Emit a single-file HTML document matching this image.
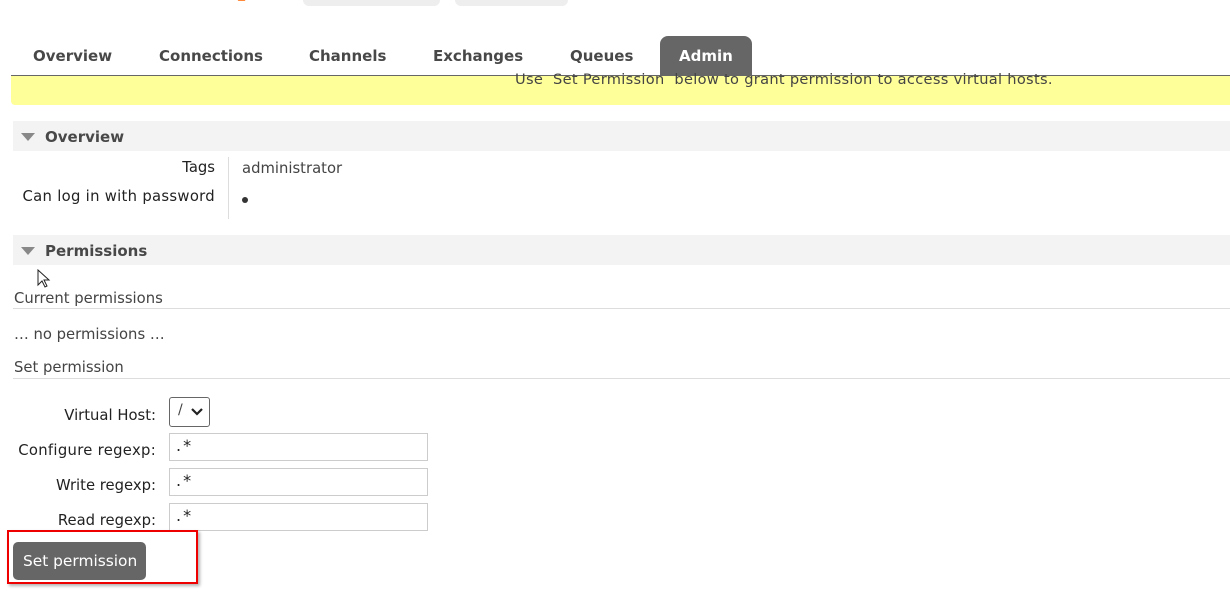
<!DOCTYPE html>
<html><head><style>
body{margin:0;width:1230px;height:597px;overflow:hidden;background:#fff;font-family:"DejaVu Sans","Liberation Sans",sans-serif;color:#444;position:relative}
.a{position:absolute;white-space:nowrap}
.tab{position:absolute;top:46px;font-weight:bold;font-size:15px;color:#484848}
.sec{position:absolute;left:13px;width:1217px;height:30px;background:#f3f3f3}
.sec span{position:absolute;left:32px;top:7px;font-weight:bold;font-size:15px;color:#484848}
.tri{position:absolute;left:8px;top:12px;width:0;height:0;border-left:7px solid transparent;border-right:7px solid transparent;border-top:8px solid #888}
.lbl{font-size:14.8px;color:#222}
.r{text-align:right}
.inp{position:absolute;left:169px;width:257px;height:26px;border:1px solid #ccc;font-size:16px;color:#222}
.inp span{position:absolute;left:6px;top:2px;letter-spacing:2px}
</style></head><body>
<div class="a" style="left:28px;top:-38px;font-size:40px;font-weight:bold;color:#f60;line-height:40px">RabbitMQ</div>
<div class="a" style="left:303px;top:-14px;width:137px;height:20px;background:#eee;border-radius:6px"></div>
<div class="a" style="left:455px;top:-14px;width:113px;height:20px;background:#eee;border-radius:6px"></div>
<div class="tab" style="left:33px;top:47px">Overview</div>
<div class="tab" style="left:159px;top:47px">Connections</div>
<div class="tab" style="left:309px;top:47px">Channels</div>
<div class="tab" style="left:433px;top:47px">Exchanges</div>
<div class="tab" style="left:570px;top:47px">Queues</div>
<div class="a" style="left:660px;top:36px;width:92px;height:39px;background:#666;border-radius:8px 8px 0 0"></div>
<div class="tab" style="left:679px;top:47px;color:#fff">Admin</div>
<div class="a" style="left:11px;top:75px;width:1219px;height:1px;background:#666"></div>
<div class="a" style="left:11px;top:76px;width:1219px;height:29px;background:#ffff99;border-radius:0 0 0 4px"></div>
<div class="a" style="left:515px;top:71px;font-size:14.6px;color:#444;letter-spacing:0.3px">Use &nbsp;Set Permission&nbsp; below to grant permission to access virtual hosts.</div>
<div class="sec" style="top:121px"><div class="tri"></div><span>Overview</span></div>
<div class="a lbl r" style="right:1015px;top:159px">Tags</div>
<div class="a lbl r" style="right:1015px;top:188px;letter-spacing:0.3px">Can log in with password</div>
<div class="a" style="left:228px;top:157px;width:1px;height:62px;background:#ddd"></div>
<div class="a lbl" style="left:242px;top:160px;color:#444">administrator</div>
<div class="a" style="left:242px;top:197px;width:6px;height:6px;border-radius:3px;background:#333"></div>
<div class="sec" style="top:235px"><div class="tri"></div><span>Permissions</span></div>
<div class="a lbl" style="left:14px;top:290px;color:#444">Current permissions</div>
<div class="a" style="left:13px;top:308px;width:1217px;height:1px;background:#ddd"></div>
<div class="a lbl" style="left:14px;top:326px;color:#444">… no permissions …</div>
<div class="a lbl" style="left:14px;top:359px;color:#444">Set permission</div>
<div class="a" style="left:13px;top:378px;width:1217px;height:1px;background:#ddd"></div>
<div class="a lbl r" style="right:1074px;top:407px">Virtual Host:</div>
<div class="a" style="left:169px;top:397px;width:39px;height:28px;border:1px solid #666;border-radius:3px;font-size:14px"><span style="position:absolute;left:8px;top:4px">/</span>
<svg style="position:absolute;left:21px;top:10px" width="12" height="8" viewBox="0 0 12 8"><path d="M1 1l5 5 5-5" stroke="#222" stroke-width="2.2" fill="none"/></svg></div>
<div class="a lbl r" style="right:1074px;top:442px;letter-spacing:0.3px">Configure regexp:</div>
<div class="inp" style="top:433px"><span>.*</span></div>
<div class="a lbl r" style="right:1074px;top:477px">Write regexp:</div>
<div class="inp" style="top:468px"><span>.*</span></div>
<div class="a lbl r" style="right:1074px;top:512px">Read regexp:</div>
<div class="inp" style="top:503px"><span>.*</span></div>
<div class="a" style="left:13px;top:542px;width:133px;height:38px;background:#666;border-radius:5px"></div>
<div class="a" style="left:23px;top:552px;font-size:15.4px;color:#fff">Set permission</div>
<div class="a" style="left:7px;top:530px;width:187px;height:50px;border:2px solid #e00;box-shadow:2px 2px 3px rgba(0,0,0,.3)"></div>
<svg class="a" style="left:37px;top:269px" width="14" height="20" viewBox="0 0 14 20"><path d="M1 1v15l4-4 3 6 2-1-3-6h5z" fill="#fff" stroke="#222" stroke-width="1"/></svg>
</body></html>
